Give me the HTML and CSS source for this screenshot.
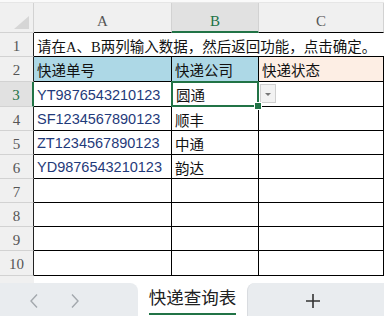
FILE: index.html
```html
<!DOCTYPE html>
<html lang="zh-CN">
<head>
  <meta charset="UTF-8" />
  <meta name="viewport" content="width=device-width, initial-scale=1.0"/>
  <title>快递查询表</title>
  <link rel="stylesheet" href="styles.css">
</head>
<body>
  <div class="topbar"></div>

  <div class="sheet">
    <div class="corner"><span class="tri"></span></div>
    <div class="colhead">A</div>
    <div class="colhead sel">B</div>
    <div class="colhead">C</div>

    <div class="rowhead">1</div>
    <div class="cell note">请在A、B两列输入数据，然后返回功能，点击确定。</div>

    <div class="rowhead">2</div>
    <div class="cell blue">快递单号</div>
    <div class="cell blue">快递公司</div>
    <div class="cell peach">快递状态</div>

    <div class="rowhead sel">3</div>
    <div class="cell code">YT9876543210123</div>
    <div class="cell active">圆通</div>
    <div class="cell drop"><span class="drop-btn"></span></div>

    <div class="rowhead">4</div>
    <div class="cell code">SF1234567890123</div>
    <div class="cell">顺丰</div>
    <div class="cell"></div>

    <div class="rowhead">5</div>
    <div class="cell code">ZT1234567890123</div>
    <div class="cell">中通</div>
    <div class="cell"></div>

    <div class="rowhead">6</div>
    <div class="cell code">YD9876543210123</div>
    <div class="cell">韵达</div>
    <div class="cell"></div>

    <div class="rowhead">7</div>
    <div class="cell"></div><div class="cell"></div><div class="cell"></div>
    <div class="rowhead">8</div>
    <div class="cell"></div><div class="cell"></div><div class="cell"></div>
    <div class="rowhead">9</div>
    <div class="cell"></div><div class="cell"></div><div class="cell"></div>
    <div class="rowhead">10</div>
    <div class="cell"></div><div class="cell"></div><div class="cell"></div>

    <div class="filler-head"></div>
    <div class="filler"></div>
  </div>

  <div class="tabs">
    <div class="tab-nav">
      <svg width="10" height="16" viewBox="0 0 10 16"><path d="M8 1.5 L2 8 L8 14.5" fill="none" stroke="#a3a8ad" stroke-width="1.4"/></svg>
      <svg width="10" height="16" viewBox="0 0 10 16"><path d="M2 1.5 L8 8 L2 14.5" fill="none" stroke="#a3a8ad" stroke-width="1.4"/></svg>
    </div>
    <div class="tab-active"><span>快递查询表</span></div>
    <div class="tab-add">
      <svg width="16" height="16" viewBox="0 0 16 16"><path d="M8 1 V15 M1 8 H15" stroke="#333" stroke-width="1.6"/></svg>
    </div>
  </div>
</body>
</html>
```

FILE: styles.css
```css
* {
  box-sizing: border-box;
}

body {
  margin: 0;
  width: 384px;
  height: 316px;
  overflow: hidden;
  background: #fff;
  font-family: "Liberation Sans", "Noto Sans CJK SC", sans-serif;
}

.topbar {
  height: 3px;
  background: #fafafa;
  border-bottom: 1px solid #e6e6e6;
}

.sheet {
  display: grid;
  grid-template-columns: 34px 138px 87px 125px;
  grid-template-rows: 30px 24px 25px 25px 24px 24px 24px 24px 24px 24px 25px 7px;
}

.corner {
  background: #f0f0f0;
  border-right: 1px solid #d2d2d2;
  border-bottom: 1px solid #d2d2d2;
  position: relative;
}

.corner .tri {
  position: absolute;
  right: 4px;
  bottom: 3px;
  width: 0;
  height: 0;
  border-left: 15px solid transparent;
  border-bottom: 13px solid #d6d6d6;
}

.colhead {
  background: #f0f0f0;
  border-right: 1px solid #d2d2d2;
  border-bottom: 1px solid #000;
  display: flex;
  align-items: center;
  justify-content: center;
  padding-top: 8px;
  font-family: "Liberation Serif", serif;
  font-size: 15px;
  color: #555;
}

.colhead.sel {
  background: #e1e1e1;
  color: #217346;
  border-bottom: 2px solid #217346;
}

.rowhead {
  background: #f0f0f0;
  border-right: 1px solid #222;
  border-bottom: 1px solid #d2d2d2;
  display: flex;
  align-items: center;
  justify-content: center;
  padding-top: 3px;
  font-family: "Liberation Serif", serif;
  font-size: 15px;
  color: #555;
}

.rowhead.sel {
  background: #e1e1e1;
  color: #217346;
  border-right: 2px solid #217346;
}

.cell {
  border-right: 1px solid #000;
  border-bottom: 1px solid #000;
  display: flex;
  align-items: center;
  padding: 1px 0 0 3px;
  font-size: 14.5px;
  color: #111;
  white-space: nowrap;
  position: relative;
}

.note {
  grid-column: span 3;
  border-right: none;
  font-family: "Liberation Serif", "Noto Sans CJK SC", serif;
  font-size: 14.5px;
  overflow: hidden;
}

.blue {
  background: #add8e6;
}

.peach {
  background: #fdeee4;
}

.code {
  color: #1f3a7a;
}

.active {
  padding-left: 4px;
}

.active::after {
  content: "";
  position: absolute;
  left: -1px;
  top: -1px;
  right: -1px;
  bottom: -1px;
  border: 2px solid #217346;
}

.active::before {
  content: "";
  position: absolute;
  right: -4px;
  bottom: -4px;
  width: 6px;
  height: 6px;
  background: #217346;
  border: 1px solid #fff;
  z-index: 2;
}

.drop-btn {
  position: absolute;
  left: 1px;
  top: 2px;
  width: 16px;
  height: 19px;
  background: #f2f2f2;
  border: 1px solid #cfcfcf;
}

.drop-btn::after {
  content: "";
  position: absolute;
  left: 4px;
  top: 8px;
  border-left: 3px solid transparent;
  border-right: 3px solid transparent;
  border-top: 3px solid #777;
}

.filler-head {
  background: #f0f0f0;
}

.filler {
  grid-column: span 3;
}

.tabs {
  display: flex;
  height: 33px;
}

.tab-nav {
  width: 138px;
  background: #e9ecef;
  border-top-right-radius: 8px;
  display: flex;
  align-items: center;
  padding: 2px 0 0 29px;
  gap: 31px;
}

.tab-active {
  width: 109px;
  display: flex;
  justify-content: center;
  padding-top: 4px;
}

.tab-active span {
  font-size: 17.5px;
  line-height: 22px;
  color: #222;
  height: 28px;
  border-bottom: 2px solid #217346;
}

.tab-add {
  flex: 1;
  background: #e9ecef;
  border-left: 1px solid #d9dce0;
  border-top-left-radius: 8px;
  display: flex;
  align-items: center;
  justify-content: center;
  padding: 2px 6px 0 0;
}
```
